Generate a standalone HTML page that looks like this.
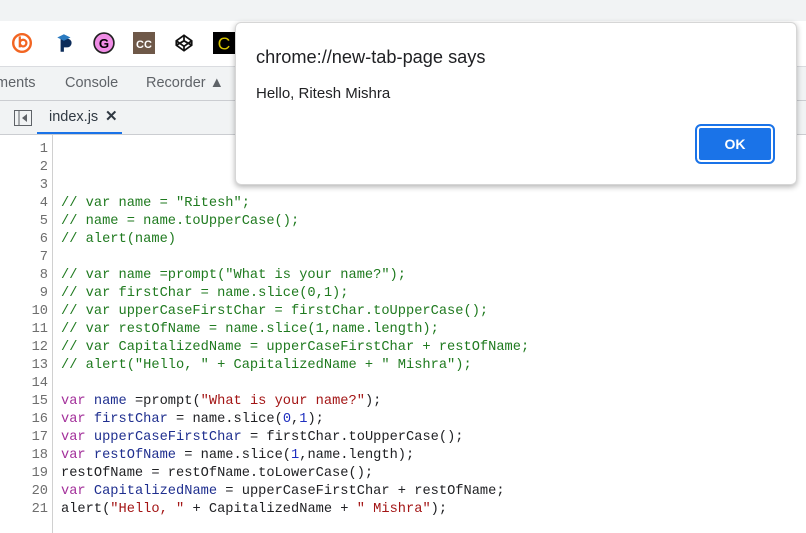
<!DOCTYPE html>
<html><head><style>
body{margin:0;width:806px;height:533px;overflow:hidden;background:#fff;font-family:"Liberation Sans",sans-serif;position:relative}
.top{position:absolute;left:0;top:0;width:806px;height:21px;background:#f1f3f4}
.bm{position:absolute;top:21px;left:0;width:806px;height:45px;background:#fff;border-bottom:1px solid #dadce0}
.ic{position:absolute;top:32px;width:22px;height:22px}
.tabs{position:absolute;top:67px;left:0;width:806px;height:33px;background:#f1f3f4;border-bottom:1px solid #cbcdd1;font-size:14.5px;color:#5f6368}
.tabs span{position:absolute;top:8px}
.ftab{position:absolute;top:101px;left:0;width:806px;height:33px;background:#f1f3f4;border-bottom:1px solid #cbcdd1}
.code{position:absolute;top:137px;left:0;width:806px;height:396px;font-family:"Liberation Mono",monospace;font-size:13.7px}
.gut{position:absolute;left:0;top:-2px;width:52px;height:398px;border-right:1px solid #d0d0d0}
.ln{position:absolute;left:0;width:48px;text-align:right;color:#6e6e6e}
.tx{position:absolute;left:61px;white-space:pre;color:#202124}
.c{color:#1f7a1f}.k{color:#a3309a}.d{color:#1f2f8f}.s{color:#a31515}.n{color:#1f2fbf}
.dlg{position:absolute;left:235px;top:22px;width:560px;height:161px;background:#fff;border:1px solid #d6d6d6;border-radius:6px;box-shadow:0 2px 6px rgba(0,0,0,.3)}
</style></head><body>
<div class="top"></div>
<div class="bm"></div>
<svg class="ic" style="left:11px" viewBox="0 0 20 20"><circle cx="10" cy="10" r="8" fill="none" stroke="#f26522" stroke-width="2.2"/><path d="M8 4v10M8 10a3 3 0 1 1 0 .1" stroke="#f26522" stroke-width="2" fill="none"/></svg>
<svg class="ic" style="left:54px" viewBox="0 0 20 20"><path d="M6 6h6a4 4 0 0 1 0 8h-3v4H6z" fill="#0c2c5a"/><path d="M3 5l6-3 6 3-6 3z" fill="#2a7ac0"/></svg>
<svg class="ic" style="left:93px" viewBox="0 0 20 20"><circle cx="10" cy="10" r="9" fill="#f08ce6" stroke="#222" stroke-width="1.5"/><text x="10" y="14.5" font-size="12" font-weight="bold" text-anchor="middle" font-family="Liberation Sans">G</text></svg>
<svg class="ic" style="left:133px" viewBox="0 0 20 20"><rect width="20" height="20" fill="#6e5848"/><text x="10" y="14.5" font-size="10" font-weight="bold" fill="#fff" text-anchor="middle" font-family="Liberation Sans">CC</text></svg>
<svg class="ic" style="left:173px" viewBox="0 0 20 20"><path d="M10 3l7 5v4l-7 5-7-5V8z M3 8l7 5 7-5 M10 3v5 M3 12l7-4 7 4 M10 17v-4" fill="none" stroke="#111" stroke-width="1.6"/></svg>
<svg class="ic" style="left:213px" viewBox="0 0 20 20"><rect width="20" height="20" fill="#000"/><text x="10" y="16" font-size="16" fill="#d4c200" text-anchor="middle" font-family="Liberation Sans">C</text></svg>
<div class="tabs"><span style="left:-4px">ments</span><span style="left:65px">Console</span><span style="left:146px">Recorder ▲</span></div>
<div class="ftab">
<svg style="position:absolute;left:14px;top:9px" width="18" height="16" viewBox="0 0 18 16"><rect x=".5" y=".5" width="17" height="15" fill="none" stroke="#5f6368"/><line x1="5" y1="0" x2="5" y2="16" stroke="#5f6368"/><path d="M13 4v8l-5-4z" fill="#5f6368"/></svg>
<div style="position:absolute;left:37px;top:0;width:85px;height:31px;border-bottom:2px solid #1a73e8"></div>
<span style="position:absolute;left:49px;top:8px;font-size:14.5px;color:#303942">index.js</span>
<span style="position:absolute;left:105px;top:6px;font-size:15px;color:#303942;font-weight:bold">✕</span>
</div>
<div class="code"><div class="gut"></div>
<div id="c"></div>
</div>
<div class="dlg">
<div style="position:absolute;left:20px;top:24px;font-size:18.2px;color:#202124">chrome://new-tab-page says</div>
<div style="position:absolute;left:20px;top:62px;font-size:15px;color:#202124">Hello, Ritesh Mishra</div>
<div style="position:absolute;left:461px;top:103px;width:76px;height:36px;background:#1a73e8;border-radius:4px;box-shadow:0 0 0 2px #fff inset;outline:2px solid #1a73e8;color:#fff;font-weight:bold;font-size:14px;text-align:center;line-height:36px">OK</div>
</div>
<script>
var L=['','','',
'<span class=c>// var name = "Ritesh";</span>',
'<span class=c>// name = name.toUpperCase();</span>',
'<span class=c>// alert(name)</span>','',
'<span class=c>// var name =prompt("What is your name?");</span>',
'<span class=c>// var firstChar = name.slice(0,1);</span>',
'<span class=c>// var upperCaseFirstChar = firstChar.toUpperCase();</span>',
'<span class=c>// var restOfName = name.slice(1,name.length);</span>',
'<span class=c>// var CapitalizedName = upperCaseFirstChar + restOfName;</span>',
'<span class=c>// alert("Hello, " + CapitalizedName + " Mishra");</span>','',
'<span class=k>var</span> <span class=d>name</span> =prompt(<span class=s>"What is your name?"</span>);',
'<span class=k>var</span> <span class=d>firstChar</span> = name.slice(<span class=n>0</span>,<span class=n>1</span>);',
'<span class=k>var</span> <span class=d>upperCaseFirstChar</span> = firstChar.toUpperCase();',
'<span class=k>var</span> <span class=d>restOfName</span> = name.slice(<span class=n>1</span>,name.length);',
'restOfName = restOfName.toLowerCase();',
'<span class=k>var</span> <span class=d>CapitalizedName</span> = upperCaseFirstChar + restOfName;',
'alert(<span class=s>"Hello, "</span> + CapitalizedName + <span class=s>" Mishra"</span>);'];
var h='';for(var i=0;i<L.length;i++){var t=5+18*i;h+='<div class=ln style="top:'+t+'px">'+(i+1)+'</div><div class=tx style="top:'+t+'px">'+L[i]+'</div>';}
document.getElementById('c').innerHTML=h;
</script>
</body></html>
